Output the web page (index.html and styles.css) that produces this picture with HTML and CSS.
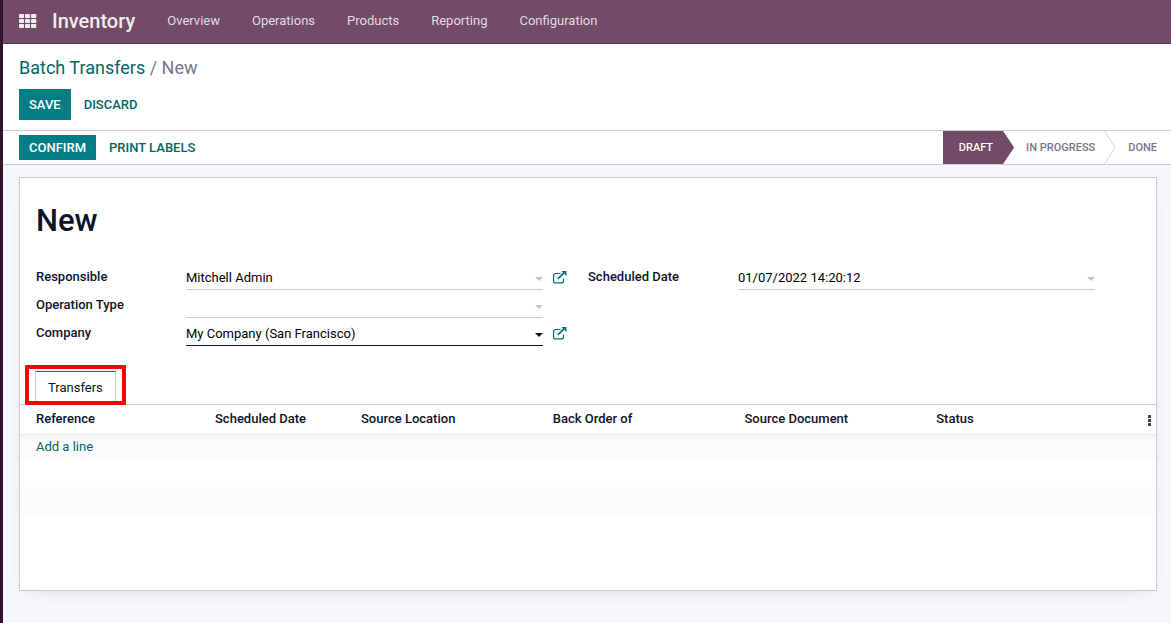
FILE: index.html
```html
<!DOCTYPE html>
<html lang="en">
<head>
<meta charset="utf-8">
<title>Inventory - Batch Transfers</title>
<link rel="stylesheet" href="styles.css">
</head>
<body>
<header class="navbar">
  <button class="apps" type="button" aria-label="Applications">
    <svg width="18" height="14" viewBox="0 0 18 14" fill="currentColor">
      <rect x="0" y="0" width="5" height="4" rx=".8"/><rect x="6" y="0" width="5" height="4" rx=".8"/><rect x="12" y="0" width="5.300" height="4" rx=".8"/>
      <rect x="0" y="5" width="5" height="4" rx=".8"/><rect x="6" y="5" width="5" height="4" rx=".8"/><rect x="12" y="5" width="5.300" height="4" rx=".8"/>
      <rect x="0" y="10" width="5" height="4" rx=".8"/><rect x="6" y="10" width="5" height="4" rx=".8"/><rect x="12" y="10" width="5.300" height="4" rx=".8"/>
    </svg>
  </button>
  <a class="brand" href="#">Inventory</a>
  <nav class="menu">
    <a href="#">Overview</a>
    <a href="#">Operations</a>
    <a href="#">Products</a>
    <a href="#">Reporting</a>
    <a href="#">Configuration</a>
  </nav>
</header>

<section class="control-panel">
  <div class="breadcrumb"><a href="#">Batch Transfers</a> / New</div>
  <div class="actions">
    <button class="btn btn-primary" type="button">SAVE</button>
    <button class="btn" type="button">DISCARD</button>
  </div>
</section>

<section class="statusbar">
  <div class="actions actions-small">
    <button class="btn btn-primary" type="button">CONFIRM</button>
    <button class="btn" type="button">PRINT LABELS</button>
  </div>
  <div class="stages">
    <button class="stage stage-current" type="button">DRAFT</button>
    <button class="stage" type="button">IN PROGRESS</button>
    <svg class="chevron" width="12" height="33" viewBox="0 0 12 33" fill="none" stroke="#d3d5dc"><path d="M.5 0l10.500 16.500L.5 33"/></svg>
    <button class="stage stage-last" type="button">DONE</button>
  </div>
</section>

<main class="content">
  <div class="sheet">
    <h1 class="title">New</h1>
    <form class="groups">
      <div class="group">
        <div class="field">
          <label for="responsible">Responsible</label>
          <div class="control"><select id="responsible"><option>Mitchell Admin</option></select></div>
          <button class="external" type="button" aria-label="Open responsible">
            <svg width="14" height="13" viewBox="0 0 14 13" fill="none" stroke="currentColor"><path stroke-width="1.200" d="M7.500 2.500H2.600a2 2 0 0 0-2 2v5.400a2 2 0 0 0 2 2h5.900a2 2 0 0 0 2-2V7.500"/><path stroke-width="1.800" d="M4.800 7.900L11 1.900"/><path fill="currentColor" stroke="none" d="M8.500 0h5v5z"/></svg>
          </button>
        </div>
        <div class="field">
          <label for="operation">Operation Type</label>
          <div class="control"><select id="operation"><option></option></select></div>
        </div>
        <div class="field">
          <label for="company">Company</label>
          <div class="control control-active"><select id="company"><option>My Company (San Francisco)</option></select></div>
          <button class="external" type="button" aria-label="Open company">
            <svg width="14" height="13" viewBox="0 0 14 13" fill="none" stroke="currentColor"><path stroke-width="1.200" d="M7.500 2.500H2.600a2 2 0 0 0-2 2v5.400a2 2 0 0 0 2 2h5.900a2 2 0 0 0 2-2V7.500"/><path stroke-width="1.800" d="M4.800 7.900L11 1.900"/><path fill="currentColor" stroke="none" d="M8.500 0h5v5z"/></svg>
          </button>
        </div>
      </div>
      <div class="group">
        <div class="field">
          <label for="date">Scheduled Date</label>
          <div class="control"><input id="date" type="text" value="01/07/2022 14:20:12"></div>
        </div>
      </div>
    </form>

    <div class="tabs">
      <div class="highlight"><button class="tab" type="button">Transfers</button></div>
    </div>
    <table class="lines">
      <colgroup><col class="col-reference"><col class="col-date"><col><col><col><col><col class="col-options"></colgroup>
      <thead>
        <tr>
          <th>Reference</th><th>Scheduled Date</th><th>Source Location</th><th>Back Order of</th><th>Source Document</th><th>Status</th>
          <th class="options"><button type="button" aria-label="Optional columns"><svg width="3" height="11" viewBox="0 0 3 11" fill="currentColor"><rect width="3" height="3" rx=".5"/><rect y="4" width="3" height="3" rx=".5"/><rect y="8" width="3" height="3" rx=".5"/></svg></button></th>
        </tr>
      </thead>
      <tbody>
        <tr><td colspan="7"><a href="#">Add a line</a></td></tr>
        <tr><td colspan="7"></td></tr>
        <tr><td colspan="7"></td></tr>
      </tbody>
    </table>
  </div>
</main>
</body>
</html>
```
FILE: styles.css
```css
* { box-sizing: border-box; }

body {
  display: flex;
  flex-direction: column;
  min-height: 100vh;
  margin: 0;
  border-left: 3px solid #2f142b;
  background: #f5f7fb;
  color: #0d1429;
  font: 13px/20px Roboto, "Liberation Sans", sans-serif;
}

a { color: #01666b; text-decoration: none; }

button, input, select { font: inherit; color: inherit; }

button {
  padding: 0;
  border: 0;
  background: none;
  cursor: pointer;
}

svg { display: block; }

.navbar {
  display: flex;
  align-items: center;
  height: 44px;
  padding: 0 16px 2px;
  border-bottom: 1px solid #5a3a52;
  background: #714b67;
}

.apps { margin-right: 15px; color: #f0ecef; }

.brand {
  margin-right: 32px;
  color: #f0ecef;
  font-size: 20px;
  font-weight: 500;
}

.menu { display: flex; gap: 32px; padding-top: 1px; }
.menu a { color: #e3dbe1; }

.control-panel {
  padding: 12px 16px 10px;
  border-bottom: 1px solid #c9ccd2;
  background: #fff;
}

.breadcrumb {
  margin-bottom: 9px;
  color: #74788a;
  font-size: 18px;
  line-height: 24px;
}

.actions { display: flex; gap: 3px; }

.btn {
  height: 31px;
  padding: 0 10px;
  color: #01666b;
  font-weight: 500;
}

.btn-primary { background: #017e84; color: #fff; }

.actions-small .btn { height: 25px; }

.statusbar {
  display: flex;
  align-items: center;
  justify-content: space-between;
  padding-left: 16px;
  border-bottom: 1px solid #c9ccd2;
  background: #fff;
}

.stages { display: flex; }

.stage {
  height: 33px;
  padding: 0 9px 0 12px;
  color: #74788a;
  font-size: 11px;
  font-weight: 500;
}

.stage-current {
  padding: 0 21px 0 16px;
  background: #714b67;
  color: #fff;
  clip-path: polygon(0 0, calc(100% - 11px) 0, 100% 50%, calc(100% - 11px) 100%, 0 100%);
}

.stage-last { padding-right: 14px; }

.content {
  display: flex;
  flex: 1;
  padding: 12px 14px 32px 16px;
}

.sheet {
  flex: 1;
  padding-top: 25px;
  border: 1px solid #c9ccd2;
  background: #fff;
  box-shadow: 0 5px 20px -15px rgba(0, 0, 0, 0.4);
}

.title {
  margin: 0 16px 23px;
  font-size: 31px;
  font-weight: 500;
  line-height: 36px;
}

.groups {
  display: grid;
  grid-template-columns: 1fr 1fr;
  margin: 0 16px 19px;
}

.field {
  display: grid;
  grid-template-columns: 150px 1fr 35px;
  height: 28px;
}

.field label { padding-top: 5px; font-weight: 500; }

.control {
  position: relative;
  margin-right: 10px;
  border-bottom: 1px solid #c9ccd2;
}

.control::after {
  content: "";
  position: absolute;
  right: 0;
  bottom: 8px;
  border: 4px solid transparent;
  border-top-color: #c3c5c9;
  border-bottom: 0;
  pointer-events: none;
}

.control-active { border-color: #0d1429; }
.control-active::after { border-top-color: #0d1429; }

.control input,
.control select {
  display: block;
  width: 100%;
  height: 27px;
  padding: 4px 0 0;
  border: 0;
  outline: 0;
  background: none;
  color: #000;
  appearance: none;
}

.external { padding-top: 3px; color: #01757b; }

.tabs {
  display: flex;
  padding-left: 5px;
  border-bottom: 1px solid #c9ccd2;
}

.highlight {
  margin-bottom: -1px;
  padding: 2px 6px 0;
  border: 4px solid #f00;
  border-radius: 1px;
}

.tab {
  height: 30px;
  padding: 2px 12px 0;
  border: 1px solid #c9ccd2;
  border-top-color: #714b67;
  border-bottom: 0;
}

.lines {
  width: 100%;
  table-layout: fixed;
  border-collapse: collapse;
}

.col-reference { width: 190px; }
.col-date { width: 146px; }
.col-options { width: 33px; }

.lines th {
  height: 28px;
  padding: 0 5px;
  font-weight: 500;
  text-align: left;
}

.lines th:first-child,
.lines td { padding: 0 16px; }

.lines td { height: 27px; }

.lines .options { padding: 2px 5px 0 0; }
.options button { display: block; margin-left: auto; color: #3a4056; }

.lines tbody tr:nth-child(odd) { background: #fcfcfc; }

.lines tbody tr:first-child {
  background: linear-gradient(#eeeeee, #f7f7f7 4px, #fbfbfb 11px);
}
```
